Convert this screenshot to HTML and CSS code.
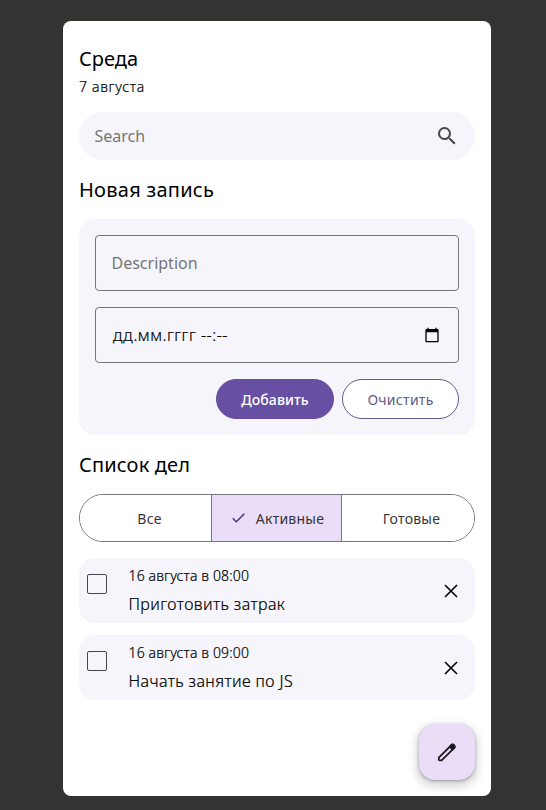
FILE: index.html
```html
<!DOCTYPE html>
<html lang="ru">
<head>
<meta charset="utf-8">
<title>Список дел</title>
<link rel="stylesheet" href="styles.css">
</head>
<body>
<main class="app">
  <header class="today">
    <h1 class="title">Среда</h1>
    <p class="date">7 августа</p>
  </header>
  <label class="search">
    <input class="search-input" type="text" placeholder="Search">
    <svg class="icon" viewBox="0 0 24 24"><path d="M15.5 14h-.79l-.28-.27A6.47 6.47 0 0 0 16 9.5 6.5 6.5 0 1 0 9.5 16c1.61 0 3.09-.59 4.23-1.57l.27.28v.79l5 4.99L20.49 19l-4.99-5zm-6 0C7.01 14 5 11.99 5 9.5S7.01 5 9.5 5 14 7.01 14 9.5 11.99 14 9.5 14z"/></svg>
  </label>
  <h2 class="title title-wide">Новая запись</h2>
  <form class="form">
    <input class="field" type="text" placeholder="Description">
    <div class="field field-date"><span>дд.мм.гггг --:--</span>
      <svg class="calendar" viewBox="0 0 24 24"><path d="M20 3h-1V1h-2v2H7V1H5v2H4c-1.100 0-2 .9-2 2v16c0 1.100.9 2 2 2h16c1.100 0 2-.9 2-2V5c0-1.100-.9-2-2-2zm0 18H4V8h16v13z"/></svg>
    </div>
    <div class="actions">
      <button class="button button-filled" type="button">Добавить</button>
      <button class="button" type="button">Очистить</button>
    </div>
  </form>
  <h2 class="title title-list">Список дел</h2>
  <div class="tabs">
    <button class="tab" type="button">Все</button>
    <button class="tab tab-active" type="button"><svg class="check" viewBox="0 0 18 18"><path d="M2.800 9.200 6.300 12.700 14.300 4.700"/></svg>Активные</button>
    <button class="tab" type="button">Готовые</button>
  </div>
  <ul class="list">
    <li class="task">
      <span class="checkbox"></span>
      <div class="task-text"><p class="task-date">16 августа в 08:00</p><p class="task-name">Приготовить затрак</p></div>
      <svg class="icon close" viewBox="0 0 24 24"><path d="M6 6l12 12M18 6 6 18"/></svg>
    </li>
    <li class="task">
      <span class="checkbox"></span>
      <div class="task-text"><p class="task-date">16 августа в 09:00</p><p class="task-name">Начать занятие по JS</p></div>
      <svg class="icon close" viewBox="0 0 24 24"><path d="M6 6l12 12M18 6 6 18"/></svg>
    </li>
  </ul>
  <button class="fab" type="button"><svg class="icon pencil" viewBox="0 0 24 24"><path d="M3.800 17.700 16.500 5a1.500 1.500 0 0 1 2.100 0l.7.7a1.500 1.500 0 0 1 0 2.100L6.600 20.300H4.500q-.7 0-.7-.7z"/><path class="eraser" d="M14.800 6.700 17.600 9.500 19.300 7.800a1.500 1.500 0 0 0 0-2.100L18.600 5a1.500 1.500 0 0 0-2.100 0z"/></svg></button>
</main>
</body>
</html>
```
FILE: styles.css
```css
* { box-sizing: border-box; margin: 0; }
body {
  height: 810px;
  padding: 21px 55px 14px 63px;
  background: #333332;
  color: #1d1b20;
  font-family: "Noto Sans", sans-serif;
  overflow: hidden;
}
button, input { font-family: inherit; }
.app {
  position: relative;
  height: 775px;
  padding: 24px 16px;
  border-radius: 8px;
  background: #fff;
}
.title { font-size: 20px; line-height: 28px; font-weight: 400; color: #000; }
.title-wide { letter-spacing: .25px; }
.title-list { letter-spacing: .15px; }
.date { margin-top: 4px; font-size: 14px; line-height: 20px; font-weight: 300; letter-spacing: .7px; color: #000; }
.date, .field-date, .task-text { -webkit-text-stroke: .2px currentColor; }
.search {
  display: flex;
  align-items: center;
  height: 48px;
  margin: 15px 0 16px;
  padding: 0 16px 0 15.500px;
  border-radius: 24px;
  background: #f6f5fb;
}
.search-input { flex: 1; min-width: 0; padding: 0; border: 0; outline: 0; background: none; font-size: 16px; }
::placeholder { color: #757575; opacity: 1; }
.icon { width: 24px; height: 24px; flex: none; fill: #49454f; }
.form {
  display: flex;
  flex-direction: column;
  gap: 16px;
  height: 216px;
  margin: 15px 0 16px;
  padding: 16px;
  border-radius: 16px;
  background: #f6f5fb;
}
.field {
  display: flex;
  align-items: center;
  justify-content: space-between;
  width: 100%;
  height: 56px;
  padding: 0 15.500px;
  border: 1px solid #79747e;
  border-radius: 4px;
  background: none;
  color: #000;
  font-size: 16px;
}
.field-date { padding: 0 16px 0 17px; font-weight: 300; letter-spacing: .5px; }
.calendar { width: 16px; height: 16px; margin-right: 2px; fill: #000; }
.actions { display: flex; justify-content: flex-end; gap: 8px; }
.button {
  height: 40px;
  width: 117px;
  padding: 0;
  border: 1px solid #625b91;
  border-radius: 20px;
  background: #fff;
  color: #625b85;
  font-size: 14px;
  font-weight: 400;
  letter-spacing: .3px;
}
.button-filled { width: 118px; border-color: #6750a4; background: #6750a4; color: #fff; font-weight: 500; letter-spacing: .1px; }
.tabs {
  display: grid;
  grid-template-columns: 131px 130px 1fr;
  height: 48px;
  margin: 15px 0 16px;
  border: 1px solid #79747e;
  border-radius: 24px;
  overflow: hidden;
}
.tab {
  display: flex;
  align-items: center;
  justify-content: center;
  gap: 8px;
  padding: 0 0 0 8px;
  border: 0;
  background: #fff;
  color: #37343c;
  font-size: 14px;
  letter-spacing: .25px;
}
.tab + .tab { padding-left: 7px; border-left: 1px solid #79747e; }
.tab + .tab-active { padding: 0 0 0 1px; background: #eaddf7; }
.check { width: 18px; height: 18px; fill: none; stroke: #4a3276; stroke-width: 1.500; }
.list { display: grid; gap: 12px; padding: 0; list-style: none; }
.task { display: flex; height: 65px; padding: 8px 12px 0 8px; border-radius: 16px; background: #f6f5fb; color: #000; }
.checkbox { width: 20px; height: 20px; margin-top: 8px; border: 1px solid #49454f; border-radius: 2px; }
.task-text { flex: 1; margin-left: 21.500px; font-weight: 300; }
.task-date { font-size: 14px; line-height: 20px; letter-spacing: .15px; }
.task-name { margin-top: 6px; font-size: 16px; line-height: 24px; letter-spacing: .4px; }
.close { margin-top: 13px; margin-right: .5px; fill: none; stroke: #000; stroke-width: 1.600; }
.fab {
  position: absolute;
  right: 16px;
  bottom: 16px;
  display: grid;
  place-items: center;
  width: 56px;
  height: 56px;
  padding: 0;
  border: 0;
  border-radius: 16px;
  background: #eaddf7;
  box-shadow: 0 1px 3px rgba(0,0,0,.3), 0 4px 8px 3px rgba(0,0,0,.15);
}
.pencil { fill: none; stroke: #1d1b20; stroke-width: 1.800; stroke-linejoin: round; }
.eraser { fill: #1d1b20; }
```
